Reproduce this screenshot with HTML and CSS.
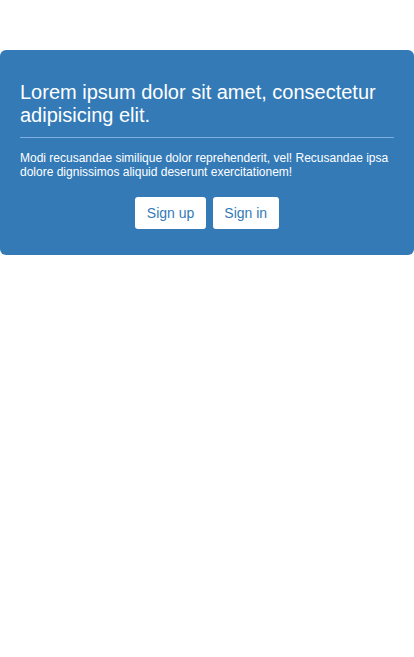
FILE: index.html
```html
<!DOCTYPE html>
<html>
<head>
<meta charset="utf-8">
<link rel="stylesheet" href="styles.css">
</head>
<body>
<div class="jumbo">
  <h1 class="title">Lorem ipsum dolor sit amet, consectetur adipisicing elit.</h1>
  <hr class="rule">
  <p class="lead">Modi recusandae similique dolor reprehenderit, vel! Recusandae ipsa dolore dignissimos aliquid deserunt exercitationem!</p>
  <div class="actions">
    <a class="btn">Sign up</a>
    <a class="btn">Sign in</a>
  </div>
</div>
</body>
</html>
```
FILE: styles.css
```css
html, body { margin: 0; padding: 0; background: #fff; }
body { font-family: "Liberation Sans", Arial, sans-serif; }
.jumbo {
  margin-top: 50px;
  background: #337ab7;
  border-radius: 6px;
  padding: 31px 20px 26px;
  color: #fff;
}
.title {
  margin: 0;
  font-size: 20px;
  font-weight: normal;
  line-height: 23px;
}
.rule {
  margin: 10px 0 13px;
  border: 0;
  border-top: 1px solid #7eaee0;
  height: 0;
}
.lead {
  margin: 0;
  font-size: 12px;
  line-height: 14px;
}
.actions {
  margin-top: 18px;
  display: flex;
  justify-content: center;
  gap: 7px;
}
.btn {
  display: inline-block;
  background: #fff;
  color: #337ab7;
  font-size: 14px;
  line-height: 20px;
  padding: 6px 11.5px;
  border-radius: 3px;
  border: 0;
}
```
